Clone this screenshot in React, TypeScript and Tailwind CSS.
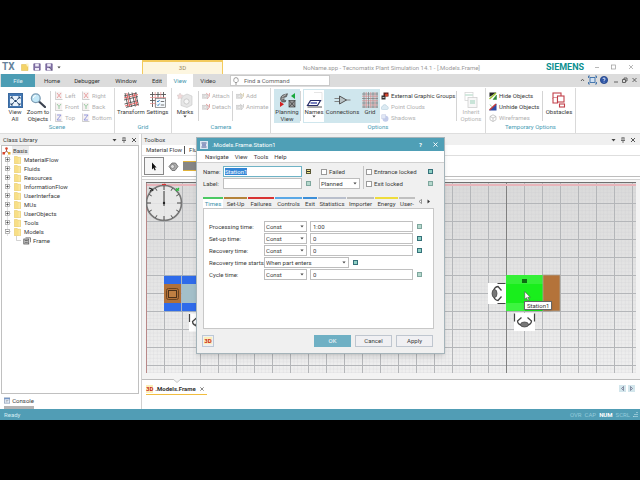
import React, { useEffect, useRef, useState } from 'react';
import clsx from 'clsx';

/* ---------- small shared bits ---------- */

const Caret = () => (
  <svg viewBox="0 0 4 3" className="w-1 h-[3px]">
    <path d="M0.4 0.5h3.2L2 2.5z" fill="#444" />
  </svg>
);

const Separator = () => <div className="w-px h-[30px] mt-[3px] bg-[#d4d4d4] shrink-0" />;

const Indicator = ({ label, dark, open }: { label: string; dark?: boolean; open?: boolean }) => (
  <button
    type="button"
    aria-label={label}
    className={clsx(
      'flex items-center w-[5px] h-[5px] border shrink-0',
      open ? 'bg-[#f0e68c] border-[#5b5836]' : dark ? 'bg-[#8fd0c4] border-[#35717a]' : 'bg-[#b5d8cd] border-[#7fa79e]'
    )}
  >
    {open && <span className="block w-[3px] h-px bg-[#333]" />}
  </button>
);

interface SelectBoxProps {
  id: string;
  label?: string;
  options: string[];
  className: string;
}

const SelectBox = ({ id, label, options, className }: SelectBoxProps) => (
  <div className={clsx('relative', className)}>
    <select
      id={id}
      aria-label={label}
      className="appearance-none block w-full h-[11px] pl-px bg-white border border-[#bdbdbd] leading-[9px] outline-none"
    >
      {options.map((option) => (
        <option key={option}>{option}</option>
      ))}
    </select>
    <span className="absolute right-[3px] top-1 pointer-events-none">
      <Caret />
    </span>
  </div>
);

const CheckBox = ({ label }: { label: string }) => (
  <label className="flex items-center gap-0.5 whitespace-nowrap">
    <input type="checkbox" className="appearance-none w-[6px] h-[6px] bg-white border border-[#9a9a9a]" />
    {label}
  </label>
);

/* ---------- icons ---------- */

const ViewAllIcon = () => (
  <svg viewBox="0 0 15 15" className="w-[15px] h-[15px]">
    <rect x="0.5" y="0.5" width="14" height="14" fill="#4378b4" stroke="#3a699f" />
    <rect x="2" y="3" width="11" height="10" fill="#e8f2fb" />
    <path d="M3 4l3 2.6M12 4L9 6.6M3 12l3-2.6M12 12L9 9.4" stroke="#1f3f66" strokeWidth="1" />
    <path d="M3 6V4h2M10 4h2v2M3 10v2h2M10 12h2v-2" stroke="#1f3f66" fill="none" strokeWidth="0.8" />
    <rect x="6.3" y="7" width="2.4" height="2" fill="#1f3f66" />
  </svg>
);

const ZoomIcon = () => (
  <svg viewBox="0 0 16 15" className="w-4 h-[15px]">
    <path d="M9 8.5l6 5.5" stroke="#3c4350" strokeWidth="2.2" strokeLinecap="round" />
    <circle cx="5.8" cy="5.2" r="4.4" fill="#c3e8f8" stroke="#7d9db5" strokeWidth="1.3" />
    <path d="M3.3 5a2.6 2.6 0 0 1 2.6-2.4" stroke="#fff" strokeWidth="1" fill="none" />
  </svg>
);

const AxisIcon = ({ axis }: { axis: 'X' | 'Y' | 'Z' }) => {
  const stroke = { X: '#e89a9a', Y: '#8fc79a', Z: '#8c93dc' }[axis];
  const path = { X: 'M2 2l4 5M6 2l-4 5', Y: 'M2 2l2 2.5L6 2M4 4.5V7', Z: 'M2 2h4L2 7h4' }[axis];
  return (
    <svg viewBox="0 0 8 9" className="w-2 h-[9px] shrink-0">
      <path d="M0.5 0.5v8h7" fill="none" stroke="#b9b9b9" strokeWidth="0.7" />
      <rect x="0.8" y="0.8" width="6.4" height="7" fill="#f5f0f0" />
      <path d={path} fill="none" stroke={stroke} strokeWidth="0.9" />
    </svg>
  );
};

const TransformIcon = () => (
  <svg viewBox="0 0 16 16" className="w-4 h-4">
    <g fill="none" strokeWidth="0.9">
      <path d="M1 4l13-3M1 8l14-3.4M1.5 12L15 8.6M3 15.4l12-3" stroke="#555" />
      <path d="M2 1l3 14M5.5 0.5l3.2 14.5M9 0.5l3.3 14M12.5 0.5l3 13" stroke="#555" />
      <path d="M1 6l14-3.4M2 14L15 10.4M3.8 1l3 14M11 1l3 13" stroke="#e05a5a" />
    </g>
  </svg>
);

const SettingsIcon = () => (
  <svg viewBox="0 0 16 16" className="w-4 h-4">
    <path d="M0 2.5h16M0 8.5h16M2.5 0v15M8 0v15M13.5 0v15" stroke="#555" strokeWidth="0.9" />
    <path d="M0 5.5h16M0 11.5h6M5.2 0v15M10.8 0v6" stroke="#e58c8c" strokeWidth="0.7" />
    <rect x="5.5" y="6.5" width="10" height="9" fill="#f4f9fd" stroke="#777" strokeWidth="0.7" />
    <path d="M7 9l1 1 1.6-2M7 12.6l1 1 1.6-2" stroke="#2b79c2" fill="none" strokeWidth="0.9" />
    <path d="M10.8 9.5h3.4M10.8 13h3.4" stroke="#555" strokeWidth="0.8" />
  </svg>
);

const MarksIcon = () => (
  <svg viewBox="0 0 16 16" className="w-4 h-4">
    <path d="M3 1l1 2 2 .3L4.5 5l.5 2-2-1-2 1 .4-2L0 3.3 2 3z" fill="#f2d9d9" stroke="#cfc6c6" strokeWidth="0.5" />
    <path d="M6 4l4-2 5 2v9l-5 2.5-6-2V8z" fill="#e6e6e6" stroke="#c6c6c6" strokeWidth="0.6" />
    <circle cx="9.5" cy="9.5" r="2.6" fill="#f6f6f6" stroke="#c3c3c3" strokeWidth="0.8" />
  </svg>
);

const CameraIcon = ({ tint }: { tint: string }) => (
  <svg viewBox="0 0 8 8" className="w-2 h-2 shrink-0">
    <rect x="0.5" y="2.2" width="5.5" height="4" fill="#dedede" stroke="#c4c4c4" strokeWidth="0.5" />
    <circle cx="3.2" cy="4.2" r="1.2" fill="#f4f4f4" stroke="#bbb" strokeWidth="0.4" />
    <path d="M4 1l3.5 3M7.5 1v3L5 7" stroke={tint} strokeWidth="0.8" fill="none" />
  </svg>
);

const PlanningIcon = () => (
  <svg viewBox="0 0 17 16" className="w-[17px] h-4">
    <path d="M1.5 7.5c0-3.2 1.8-4.5 4-5l3-.8-1 3-2.5.7v2.8l2 .3-.8 1.5H3z" fill="#777" stroke="#444" strokeWidth="0.6" />
    <path d="M3 5l4-2.5M2.5 7l3-1" stroke="#ddd" strokeWidth="0.6" />
    <path d="M16 1v6l-4-3z" fill="#18a83c" />
    <path d="M1 9.5v5.5l4-2.7z" fill="#d32020" />
    <rect x="10" y="8.5" width="6" height="6.5" fill="#999" stroke="#444" strokeWidth="0.7" />
    <path d="M10 8.5l6 6.5M16 8.5L10 15" stroke="#333" strokeWidth="0.7" />
  </svg>
);

const NamesIcon = () => (
  <svg viewBox="0 0 17 16" className="w-[17px] h-4">
    <path d="M8 0.5h8v9" fill="none" stroke="#d4d4d4" strokeWidth="0.6" />
    <path d="M4.5 8.5h10l-3 5h-10z" fill="#fff" stroke="#242a66" strokeWidth="1.2" />
    <path d="M4.5 11h6.5" stroke="#3440a0" strokeWidth="1.3" />
    <path d="M1.5 15h14.5" stroke="#444" strokeWidth="0.9" />
  </svg>
);

const ConnectionsIcon = () => (
  <svg viewBox="0 0 17 16" className="w-[17px] h-4">
    <path d="M0.5 6.5h5.5M0.5 9.5h5.5M11 8h5.5" stroke="#777" strokeWidth="0.9" />
    <path d="M5.5 4l7 4-7 4z" fill="#b9c3c6" stroke="#555" strokeWidth="1" />
  </svg>
);

const GridIcon = () => (
  <svg viewBox="0 0 16 16" className="w-4 h-4">
    <path d="M0 2h16M0 6.5h16M0 11h16M0 15h16M2 0v16M6.5 0v16M11 0v16M15 0v16" stroke="#777" strokeWidth="0.7" />
    <path d="M0 4.2h16M0 8.8h16M0 13h16M4.2 0v16M8.8 0v16M13 0v16" stroke="#d98686" strokeWidth="0.7" />
  </svg>
);

const GroupsIcon = () => (
  <svg viewBox="0 0 8 8" className="w-2 h-2 shrink-0">
    <rect x="2.5" y="0.5" width="5" height="4" fill="#5a2020" />
    <rect x="0.5" y="3.5" width="4" height="4" fill="#333" />
    <circle cx="5.5" cy="3" r="1.6" fill="#d8452c" />
    <path d="M1.5 5.5h2" stroke="#fff" strokeWidth="0.7" />
  </svg>
);

const CloudIcon = () => (
  <svg viewBox="0 0 8 8" className="w-2 h-2 shrink-0">
    <path d="M1.5 6.5a1.5 1.5 0 0 1 0-3 2.2 2.2 0 0 1 4.3-.3 1.7 1.7 0 0 1 .4 3.3z" fill="#dceaf2" stroke="#b6cfdd" strokeWidth="0.6" />
  </svg>
);

const ShadowIcon = () => (
  <svg viewBox="0 0 8 8" className="w-2 h-2 shrink-0">
    <circle cx="4.5" cy="4.8" r="3" fill="#c3ccea" />
    <rect x="0.8" y="0.8" width="4" height="4" fill="#e2e8f6" stroke="#bcc4e0" strokeWidth="0.5" />
  </svg>
);

const InheritIcon = () => (
  <svg viewBox="0 0 14 16" className="w-[14px] h-4">
    <rect x="1" y="0.5" width="8" height="8" fill="#fff" stroke="#d6d6d6" strokeWidth="0.8" />
    <path d="M1 3h8" stroke="#c7e3d6" strokeWidth="1.5" />
    <rect x="4" y="5.5" width="9" height="10" fill="#f7f7f7" stroke="#cfcfcf" strokeWidth="0.8" />
    <rect x="6" y="8" width="5" height="4" fill="#c9e4d8" />
  </svg>
);

const HideIcon = ({ unhide }: { unhide?: boolean }) => (
  <svg viewBox="0 0 8 8" className="w-2 h-2 shrink-0">
    <path d={unhide ? 'M0 7.5L7.5 0.5v7z' : 'M0.5 0.5h7L0.5 5z'} fill={unhide ? '#2d4aa6' : '#222'} />
    <path d="M0.5 7L7 1" stroke={unhide ? '#c23a3a' : '#9bc22a'} strokeWidth="1.4" />
    <path d={unhide ? 'M1 1.5l1.5 2' : 'M4 7.5L7.5 3v4.5z'} fill="#2f8a3c" stroke="#2f8a3c" strokeWidth="0.5" />
  </svg>
);

const WireIcon = () => (
  <svg viewBox="0 0 8 8" className="w-2 h-2 shrink-0">
    <path d="M1 2.5l3-1.7 3 1.7v3.3L4 7.5 1 5.8zM1 2.5l3 1.5 3-1.5M4 4v3.5" fill="none" stroke="#b5b5b5" strokeWidth="0.7" />
  </svg>
);

const ObstaclesIcon = () => (
  <svg viewBox="0 0 14 16" className="w-[14px] h-4">
    <g fill="#fff" stroke="#c2404a" strokeWidth="1.1">
      <rect x="1" y="1" width="8" height="5" />
      <path d="M1 6v5h4.5V6" />
      <rect x="5.5" y="4" width="6.5" height="6" />
      <rect x="7.5" y="12" width="5" height="3" />
    </g>
  </svg>
);

const FolderIcon = () => (
  <svg viewBox="0 0 7 8" className="w-[7px] h-2">
    <path d="M0.3 0.5h3l0.7 0.8h2.7v6.4H0.3z" fill="#f8df86" stroke="#e3c25c" strokeWidth="0.5" />
    <path d="M5.2 1.5v6" stroke="#fdf0bd" strokeWidth="0.7" />
  </svg>
);

const FrameIcon = () => (
  <svg viewBox="0 0 8 8" className="w-2 h-2">
    <path d="M2.5 0.8h5v4.5" fill="none" stroke="#555" strokeWidth="0.7" />
    <rect x="0.8" y="2" width="5" height="5" fill="#ccc" stroke="#444" strokeWidth="0.7" />
    <path d="M1.8 3.5h3M1.8 5.3h3" stroke="#444" strokeWidth="0.7" />
  </svg>
);

const ThreeD = () => <span className="font-bold text-[#c8281c] leading-2 bg-[#fbeeb8]">3D</span>;

const PanelControls = () => (
  <svg viewBox="0 0 25 6" className="w-[25px] h-[6px]">
    <path d="M0.5 2h4L2.5 4.5z" fill="#444" />
    <path d="M10.5 0.8h3M11 0.8v2.7M13 0.8v2.7M10 3.5h4M12 3.5V6" stroke="#555" strokeWidth="0.8" fill="none" />
    <path d="M20 1l4 4M24 1l-4 4" stroke="#444" strokeWidth="0.9" />
  </svg>
);

/* ---------- title bar and ribbon ---------- */

const TitleBar = () => (
  <header className="flex h-[14px] bg-white">
    <div className="flex items-center gap-1 w-[142px] pl-0.5">
      <span className="w-[15px] text-[10px] leading-3 font-bold text-[#66839c]">TX</span>
      <svg viewBox="0 0 8 8" className="w-2 h-2">
        <path d="M0.5 1.5h5l1.5 1v5H0.5z" fill="#f4d367" stroke="#dcb84b" strokeWidth="0.5" />
        <path d="M5 0.5h2.5v3H6z" fill="#fdf3c4" />
      </svg>
      {[0, 1].map((i) => (
        <svg key={i} viewBox="0 0 8 8" className="w-2 h-2">
          <path d="M0.8 0.8h6.4v6.4H0.8z" fill="#8474a8" stroke="#65558d" strokeWidth="0.7" />
          <path d="M2.2 0.8h3.6v2.7H2.2zM2 5h4v2.2H2z" fill="#eee9f7" />
          {i === 1 && <path d="M4 4l3 3.5" stroke="#5a5370" strokeWidth="1" />}
        </svg>
      ))}
      <Caret />
    </div>
    <div className="w-[81px] bg-[#fdf6e0] border-t-2 border-x border-[#f3cb5e] text-center leading-[11px] text-[#9a8a62]">
      3D
    </div>
    <h1 className="flex-1 pl-20 leading-[15px] text-[#999] whitespace-nowrap">
      NoName.spp - Tecnomatix Plant Simulation 14.1 - [.Models.Frame]
    </h1>
    <span className="w-[45px] text-[9px] leading-[14px] font-bold text-[#0a8f8f]">SIEMENS</span>
    <div className="flex items-center w-[49px]">
      <svg viewBox="0 0 49 8" className="w-[49px] h-2" fill="none" stroke="#999" strokeWidth="0.7">
        <path d="M4 4.5h4M38 2l4 4M42 2l-4 4" />
        <rect x="20.5" y="2" width="4" height="4" />
      </svg>
    </div>
  </header>
);

const menuTabs = [
  { name: 'Home', width: 'w-[34px]' },
  { name: 'Debugger', width: 'w-9' },
  { name: 'Window', width: 'w-[42px]' },
  { name: 'Edit', width: 'w-5' },
  { name: 'View', width: 'w-[26px]' },
  { name: 'Video', width: 'w-[30px]' },
];

const TabRow = () => (
  <nav className="flex h-[13px] bg-[#dcdcdc] pl-px leading-[13px]">
    <button type="button" className="w-[34px] bg-[#4c9db4] text-[#e4f3f7]">File</button>
    {menuTabs.map((tab) => (
      <button
        key={tab.name}
        type="button"
        className={clsx(tab.width, 'text-center', tab.name === 'View' ? 'bg-white text-[#3b93ab]' : 'text-[#333]')}
      >
        {tab.name}
      </button>
    ))}
    <label className="flex items-center w-[100px] h-[11px] mt-px ml-[7px] bg-white border border-[#c9c9c9]">
      <svg viewBox="0 0 8 8" className="w-2 h-2 ml-px" fill="none" stroke="#777" strokeWidth="0.7">
        <path d="M3 5.5C1.8 4.5 1.6 3.6 1.8 2.8a2.2 2.2 0 0 1 4.4 0C6.4 3.6 6.2 4.5 5 5.5zM3 7h2" />
      </svg>
      <input
        aria-label="Find a Command"
        placeholder="Find a Command"
        className="w-20 pl-1 leading-[9px] outline-none placeholder:text-[#666]"
      />
    </label>
    <svg viewBox="0 0 60 12" className="w-[60px] h-3 ml-auto" fill="none" stroke="#555" strokeWidth="0.9">
      <path d="M1 7l1.5-1.8L4 7M34 8h4M52.5 4l4 4M56.5 4l-4 4" />
      <rect x="10" y="3.5" width="5" height="5" fill="#cfe0f2" stroke="#3a6ea8" />
      <path d="M8.5 4V2H10M15 2h1.5v2M8.5 8v2H10M15 10h1.5V8" stroke="#3a6ea8" />
      <circle cx="24" cy="6" r="3.6" fill="#2f57a8" stroke="#27488c" />
      <path d="M22.9 5c.2-1.4 2.3-1.2 2.2.1 0 .8-1.1.8-1.1 1.7M24 7.8v.6" stroke="#fff" />
      <path d="M42.5 5.5h3v3h-3zM44 5.5V4h3v3h-1.5" />
    </svg>
  </nav>
);

interface BigButtonProps {
  icon: React.ReactNode;
  lines: string[];
  width: string;
  state?: 'on' | 'disabled';
  menu?: boolean;
}

const BigButton = ({ icon, lines, width, state, menu }: BigButtonProps) => (
  <button
    type="button"
    disabled={state === 'disabled'}
    className={clsx(
      'flex flex-col items-center shrink-0 h-[34px] mt-px pt-[3px] leading-[7px] whitespace-nowrap',
      width,
      state === 'on' && 'bg-[#cfe6ed]',
      state === 'disabled' && 'text-[#b5b5b5]'
    )}
  >
    <span className="flex items-center h-4">{icon}</span>
    {lines.map((line) => (
      <span key={line}>{line}</span>
    ))}
    {menu && <Caret />}
  </button>
);

const SmallButton = ({ icon, text, disabled }: { icon: React.ReactNode; text: string; disabled?: boolean }) => (
  <button
    type="button"
    disabled={disabled}
    className={clsx('flex items-center gap-0.5 h-[11px] whitespace-nowrap', disabled && 'text-[#b0b0b0]')}
  >
    {icon}
    {text}
  </button>
);

const RibbonGroup = ({ title, width, children }: { title: string; width: string; children: React.ReactNode }) => (
  <section className={clsx('flex flex-col h-[45px] mt-px border-r border-[#d9d9d9] shrink-0', width)}>
    <div className="flex h-[35px]">{children}</div>
    <h2 className="text-center leading-2 text-[#4a9db5]">{title}</h2>
  </section>
);

const Ribbon = () => (
  <div className="flex h-[47px] bg-white border-b border-[#dedede]">
    <RibbonGroup title="Scene" width="w-[115px]">
      <BigButton icon={<ViewAllIcon />} lines={['View', 'All']} width="w-[22px] ml-1" />
      <BigButton icon={<ZoomIcon />} lines={['Zoom to', 'Objects']} width="w-6" />
      <Separator />
      <div className="grid grid-cols-[27px_auto] content-start pt-0.5 pl-1">
        <SmallButton icon={<AxisIcon axis="X" />} text="Left" disabled />
        <SmallButton icon={<AxisIcon axis="X" />} text="Right" disabled />
        <SmallButton icon={<AxisIcon axis="Y" />} text="Front" disabled />
        <SmallButton icon={<AxisIcon axis="Y" />} text="Back" disabled />
        <SmallButton icon={<AxisIcon axis="Z" />} text="Top" disabled />
        <SmallButton icon={<AxisIcon axis="Z" />} text="Bottom" disabled />
      </div>
    </RibbonGroup>
    <RibbonGroup title="Grid" width="w-[57px]">
      <BigButton icon={<TransformIcon />} lines={['Transform']} width="w-[30px] ml-px" />
      <BigButton icon={<SettingsIcon />} lines={['Settings']} width="w-[23px]" />
    </RibbonGroup>
    <RibbonGroup title="Camera" width="w-[99px]">
      <BigButton icon={<MarksIcon />} lines={['Marks']} width="w-[26px]" menu />
      <Separator />
      <div className="flex flex-col w-[33px] pt-0.5 pl-[3px]">
        <SmallButton icon={<CameraIcon tint="#e6a6a6" />} text="Attach" disabled />
        <SmallButton icon={<CameraIcon tint="#dd8f8f" />} text="Detach" disabled />
      </div>
      <Separator />
      <div className="flex flex-col pt-0.5 pl-[3px]">
        <SmallButton icon={<CameraIcon tint="#d8cda6" />} text="Add" disabled />
        <SmallButton icon={<CameraIcon tint="#c9c9c9" />} text="Animate" disabled />
      </div>
    </RibbonGroup>
    <RibbonGroup title="Options" width="w-[215px]">
      <BigButton icon={<PlanningIcon />} lines={['Planning', 'View']} width="w-[26px] ml-[3px]" state="on" />
      <Separator />
      <div className="flex ml-0.5">
        <BigButton icon={<NamesIcon />} lines={['Names']} width="w-[22px] outline -outline-offset-1 outline-[#cfe6ed]" menu />
        <BigButton icon={<ConnectionsIcon />} lines={['Connections']} width="w-[35px]" state="on" />
        <BigButton icon={<GridIcon />} lines={['Grid']} width="w-5" state="on" />
      </div>
      <div className="flex flex-col w-[76px] pt-0.5 pl-px">
        <SmallButton icon={<GroupsIcon />} text="External Graphic Groups" />
        <SmallButton icon={<CloudIcon />} text="Point Clouds" disabled />
        <SmallButton icon={<ShadowIcon />} text="Shadows" disabled />
      </div>
      <Separator />
      <BigButton icon={<InheritIcon />} lines={['Inherit', 'Options']} width="w-7" state="disabled" />
    </RibbonGroup>
    <RibbonGroup title="Temporary Options" width="w-[90px]">
      <div className="flex flex-col w-14 pt-0.5 pl-[3px]">
        <SmallButton icon={<HideIcon />} text="Hide Objects" />
        <SmallButton icon={<HideIcon unhide />} text="Unhide Objects" />
        <SmallButton icon={<WireIcon />} text="Wireframes" disabled />
      </div>
      <Separator />
      <BigButton icon={<ObstaclesIcon />} lines={['Obstacles']} width="w-8" />
    </RibbonGroup>
  </div>
);

/* ---------- class library ---------- */

const folders = [
  'MaterialFlow', 'Fluids', 'Resources', 'InformationFlow', 'UserInterface',
  'MUs', 'UserObjects', 'Tools', 'Models',
];

const ClassLibrary = () => (
  <aside className="flex flex-col w-[139px] shrink-0 bg-white">
    <div className="flex items-center justify-between h-[11px] pl-[3px] pr-[2px] bg-[#f0f0f0]">
      <h2>Class Library</h2>
      <PanelControls />
    </div>
    <ul className="flex-1 ml-px border border-[#c0c0c0] leading-[9px]">
      <li className="flex items-center gap-px">
        <svg viewBox="0 0 9 8" className="w-[9px] h-2">
          <path d="M4.5 1v3M4.5 4L2 6.5M4.5 4L7 6.5" stroke="#8c3020" strokeWidth="0.8" />
          <circle cx="4.5" cy="1.5" r="1.3" fill="#d8452c" />
          <rect x="0.5" y="5" width="2.5" height="2.5" fill="#d8452c" />
          <rect x="6" y="5" width="2.5" height="2.5" fill="#e0a52c" />
        </svg>
        <span className="bg-[#ececec] px-px">Basis</span>
      </li>
      {folders.map((folder) => (
        <li key={folder} className="flex items-center gap-[3px] pl-[3px]">
          <svg viewBox="0 0 6 9" className="w-[6px] h-[9px]">
            <path d="M2.5 0v9M4.5 4.5H6" stroke="#c4c4c4" strokeWidth="0.5" />
            <rect x="0.5" y="2.5" width="4" height="4" fill="#fff" stroke="#999" strokeWidth="0.7" />
            <path d={folder === 'Models' ? 'M1.3 4.5h2.4' : 'M1.3 4.5h2.4M2.5 3.3v2.4'} stroke="#333" strokeWidth="0.7" />
          </svg>
          <FolderIcon />
          {folder}
        </li>
      ))}
      <li className="flex items-center gap-[2px] pl-[14px]">
        <svg viewBox="0 0 5 9" className="w-[5px] h-[9px]">
          <path d="M0.5 0v4.5H5" fill="none" stroke="#b5b5b5" strokeWidth="0.6" />
        </svg>
        <FrameIcon />
        Frame
      </li>
    </ul>
    <div className="h-[15px]">
      <button type="button" className="flex flex-col w-[30px] ml-1">
        <span className="flex items-center gap-0.5 h-3">
          <svg viewBox="0 0 7 7" className="w-[7px] h-[7px]">
            <rect x="0.5" y="0.5" width="6" height="6" fill="#e6eef8" stroke="#7d91ad" strokeWidth="0.7" />
            <path d="M0.5 1.5h6" stroke="#4c78b8" strokeWidth="1" />
            <path d="M2 3.5h3M2 5h2" stroke="#777" strokeWidth="0.5" />
          </svg>
          Console
        </span>
        <span className="w-full h-[3px] bg-[#b3b3b3]" />
      </button>
    </div>
  </aside>
);

/* ---------- model canvas ---------- */

const Person = ({ transform }: { transform: string }) => (
  <g transform={transform}>
    <rect x="-10.5" y="-9" width="21" height="18" fill="#fff" />
    <path d="M-10 -8.5v8M10 -8.5v8" stroke="#444" strokeWidth="1.2" />
    <path d="M-3 -4.5l-4 3.5c0 2.5 3 4.5 7 5M3 -4.5l4 3.5c0 2.5-3 4.5-7 5" fill="none" stroke="#444" strokeWidth="1.3" />
    <ellipse cx="0" cy="2.5" rx="4" ry="2.5" fill="#777" stroke="#444" strokeWidth="0.7" />
  </g>
);

const ModelCanvas = () => (
  <div className="relative flex-1 mx-1 border-t border-[#6f6f6f] bg-linear-to-b from-[#dadada] to-[#efefef] overflow-hidden">
    <svg className="absolute inset-0 w-full h-full">
      <defs>
        <pattern id="minor" width="3.6" height="3.6" patternUnits="userSpaceOnUse" x="0" y="2">
          <path d="M0 0h3.6M0 0v3.6" stroke="#c0c4c8" strokeOpacity="0.45" strokeWidth="0.7" fill="none" />
        </pattern>
        <pattern id="major" width="18" height="18" patternUnits="userSpaceOnUse" x="0" y="2">
          <path d="M0 0.5h18M0.5 0v18" stroke="#b4b6b9" strokeWidth="1" fill="none" />
        </pattern>
      </defs>
      <rect width="100%" height="100%" fill="url(#minor)" />
      <rect width="100%" height="100%" fill="url(#major)" />
      <path d="M360.5 0v200" stroke="#808080" strokeWidth="1" />
      <rect width="100%" height="2" y="1" fill="#e8b4ba" />
      <rect width="1" height="100%" fill="#b88888" />

      {/* compass */}
      <circle cx="18" cy="20" r="17.5" fill="#ebebeb" fillOpacity="0.8" stroke="#777" strokeWidth="1.6" />
      <path
        d="M18 3v4M18 33v4M1 20h4M31 20h4M9.5 5.3l1.4 2.4M26.5 5.3l-1.4 2.4M3.3 11.5l2.4 1.4M32.7 11.5l-2.4 1.4M3.3 28.5l2.4-1.4M32.7 28.5l-2.4-1.4M9.5 34.7l1.4-2.4M26.5 34.7l-1.4-2.4"
        stroke="#222"
        strokeWidth="0.8"
      />
      <path d="M18 8v15" stroke="#222" strokeWidth="0.9" />
      <circle cx="18" cy="20" r="1.2" fill="#222" />
      <path d="M3 5l3 1-2 2.5M6 6l1 2" stroke="#222" strokeWidth="1.1" fill="none" />
      <path d="M30 8l3-3M30 5.5l3 2" stroke="#28b93c" strokeWidth="1.2" />
      <path d="M16 1.5h4" stroke="#d33" strokeWidth="1.2" />

      {/* source and conveyor on the left */}
      <rect x="18" y="93" width="17" height="35" fill="#2f6bea" />
      <rect x="18" y="101" width="17" height="19" fill="#b1713a" />
      <rect x="20.5" y="105.5" width="12" height="11" rx="2" fill="none" stroke="#6b431f" strokeWidth="1" />
      <rect x="22.5" y="107.5" width="8" height="7" fill="#c07f42" stroke="#4e321a" strokeWidth="1" />
      <rect x="36" y="93" width="37" height="35" fill="#2f6bea" />
      <rect x="36" y="101" width="37" height="19" fill="#a3bfc9" />
      <path d="M18 92.5h55M18 128.5h55M35.5 92.5v36" stroke="#9aabbf" strokeWidth="0.8" />
      <Person transform="translate(53.5 139.5)" />

      {/* selected station */}
      <Person transform="translate(351 110.5) rotate(90)" />
      <Person transform="translate(378.5 139)" />
      <rect x="360" y="92" width="37" height="36" fill="#19ee1c" />
      <rect x="360" y="92" width="37" height="9" fill="#35f038" />
      <rect x="360" y="120" width="19" height="8" fill="#3df440" />
      <rect x="376" y="96" width="5" height="4" fill="#0d6d12" />
      <rect x="397" y="92" width="17" height="36" fill="#b4733a" stroke="#a9a29a" strokeWidth="0.8" />
    </svg>
    <span className="absolute left-[378px] top-[118px] px-0.5 border border-[#666] bg-white leading-[7px] text-[#333] shadow-sm">
      Station1
    </span>
    <svg viewBox="0 0 6 9" className="absolute left-[378px] top-[108px] w-[7px] h-[10px]">
      <path d="M0.5 0.5v7l1.6-1.5 1.2 2.6 1.1-.5-1.2-2.5h2.3z" fill="#fff" stroke="#444" strokeWidth="0.5" />
    </svg>
  </div>
);

const Workspace = () => (
  <main className="flex flex-col flex-1 min-w-0 ml-0.5 bg-white border-l border-[#d0d0d0]">
    <div className="flex items-center justify-between h-[11px] pl-0.5 pr-1 bg-[#f0f0f0]">
      <h2>Toolbox</h2>
      <PanelControls />
    </div>
    <div className="flex items-center h-[11px] pl-1 border-b border-[#dedede] whitespace-nowrap">
      <button type="button" className="pr-0.5 border-r border-[#555] leading-2">Material Flow</button>
      <button type="button" className="pl-1 leading-2">Fluids</button>
    </div>
    <div className="flex items-center h-[21px] pl-0.5 gap-1 border-b border-[#bdbdbd]">
      <button type="button" aria-label="Select" className="flex items-center justify-center w-5 h-[18px] bg-[#f6f6f6] border border-[#888]">
        <svg viewBox="0 0 6 9" className="w-[6px] h-[9px]">
          <path d="M1 0.5v7l1.5-1.5 1.2 2.6 1.1-.5L3.6 5.6h2z" fill="#111" />
        </svg>
      </button>
      <svg viewBox="0 0 11 11" className="w-[11px] h-[11px]">
        <path d="M1 5.5L4 2h3.5L10 5.5 7 9.5H4z" fill="#a9a9a9" stroke="#666" strokeWidth="0.8" />
        <circle cx="4.5" cy="5.5" r="2" fill="#ddd" stroke="#777" strokeWidth="0.7" />
      </svg>
      <svg viewBox="0 0 18 10" className="w-[18px] h-[10px]">
        <rect width="18" height="10" fill="#e0b23a" />
        <rect y="1" width="18" height="8" fill="#858585" />
      </svg>
    </div>
    <div className="h-[3px] mt-0.5 border-t border-[#d4d4d4] bg-[#f5f5f5]" />
    <div className="flex flex-col flex-1 bg-[#f3f3f3]">
      <ModelCanvas />
      <div className="h-[6px]" />
    </div>
    <div className="relative flex justify-between items-start h-[30px] pt-[3px] pl-1 pr-[5px] bg-white border-t border-[#bdbdbd]">
      <svg viewBox="0 0 8 4" className="absolute left-[31px] -top-px w-2 h-1">
        <path d="M0 0l4 3.5L8 0" fill="#f3f3f3" stroke="#bdbdbd" strokeWidth="0.8" />
      </svg>
      <button type="button" className="flex items-center gap-0.5 w-[61px] h-3 border-b border-[#f1bd3f] font-bold text-[#333] whitespace-nowrap">
        <ThreeD />
        .Models.Frame
        <svg viewBox="0 0 4 4" className="w-1 h-1 shrink-0 ml-auto mr-[3px]">
          <path d="M0.3 0.3l3.4 3.4M3.7 0.3L0.3 3.7" stroke="#555" strokeWidth="0.7" />
        </svg>
      </button>
      <div className="flex gap-0.5 pt-0.5">
        {['M4.5 1.5v4l-2-2z', 'M2.5 1.5v4l2-2z'].map((d, i) => (
          <button key={d} type="button" aria-label={i ? 'Next' : 'Previous'} className="w-[7px] h-[7px] bg-[#d3e6ec]">
            <svg viewBox="0 0 7 7" className="w-[7px] h-[7px]">
              <path d={d} fill="#cfdfe4" stroke="#557" strokeWidth="0.6" />
            </svg>
          </button>
        ))}
      </div>
    </div>
  </main>
);

/* ---------- station dialog ---------- */

const dialogTabs = [
  { name: 'Times', width: 'w-5', bar: 'border-[#4cc964]' },
  { name: 'Set-Up', width: 'w-[23px]', bar: 'border-[#b5833a]' },
  { name: 'Failures', width: 'w-[26px]', bar: 'border-[#d83434]' },
  { name: 'Controls', width: 'w-[27px]', bar: 'border-[#5aa8e6]' },
  { name: 'Exit', width: 'w-[14px]', bar: 'border-[#3d8fd8]' },
  { name: 'Statistics', width: 'w-7', bar: 'border-[#b9bfcc]' },
  { name: 'Importer', width: 'w-[27px]', bar: 'border-[#bdbdbd]' },
  { name: 'Energy', width: 'w-[23px]', bar: 'border-[#eedc3c]' },
  { name: 'User-', width: 'w-4', bar: 'border-[#c0c0c0]' },
];

const timeRows = [
  { id: 'processing', label: 'Processing time:', value: '1:00', dark: false },
  { id: 'setup', label: 'Set-up time:', value: '0', dark: true },
  { id: 'recovery', label: 'Recovery time:', value: '0', dark: true },
  { id: 'starts', label: 'Recovery time starts:', value: null, dark: false },
  { id: 'cycle', label: 'Cycle time:', value: '0', dark: false },
];

const field = 'h-[11px] px-0.5 bg-white border border-[#c0c0c0] leading-[9px] outline-none';

const StationDialog = () => {
  const [activeTab, setActiveTab] = useState('Times');
  const nameRef = useRef<HTMLInputElement>(null);

  useEffect(() => {
    nameRef.current?.focus();
    nameRef.current?.select();
  }, []);

  return (
    <div
      role="dialog"
      aria-label=".Models.Frame.Station1"
      className="absolute left-[196px] top-[77px] w-[249px] bg-[#f0f0f0] border border-[#a5b4ba] shadow-md"
    >
      <div className="flex items-center h-[13px] pl-[3px] pr-[3px] bg-[#4f9fb6] text-white">
        <svg viewBox="0 0 8 8" className="w-2 h-2">
          <rect width="8" height="8" fill="#dce8f2" />
          <path d="M1.5 2h5M1.5 6h5" stroke="#3a4c88" strokeWidth="0.9" />
          <rect x="2" y="3.2" width="4" height="1.6" fill="#7a86b8" />
        </svg>
        <span className="pl-1 flex-1">.Models.Frame.Station1</span>
        <button type="button" aria-label="Help" className="w-[17px] pr-2 font-bold">?</button>
        <button type="button" aria-label="Close" className="w-2">
          <svg viewBox="0 0 5 5" className="w-[5px] h-[5px]">
            <path d="M0.5 0.5l4 4M4.5 0.5l-4 4" stroke="#fff" strokeWidth="0.9" />
          </svg>
        </button>
      </div>
      <div className="flex items-center gap-[6px] h-[12px] pl-2 bg-white border-b border-[#d0d0d0]">
        {['Navigate', 'View', 'Tools', 'Help'].map((item) => (
          <button key={item} type="button">{item}</button>
        ))}
      </div>

      <div className="flex pt-[3px] pl-[6px] pr-[11px]">
        <div className="grid grid-cols-[18px_79px_7px] gap-x-[2px] gap-y-px items-center">
          <label htmlFor="name">Name:</label>
          <input
            id="name"
            ref={nameRef}
            defaultValue="Station1"
            className="h-[11px] px-px bg-white border border-[#6fb3c6] leading-[9px] outline-none selection:bg-[#3385d6] selection:text-white"
          />
          <span className="pl-0.5"><Indicator label="Name inheritance" open /></span>
          <label htmlFor="label">Label:</label>
          <input id="label" className={field} />
          <span className="pl-0.5"><Indicator label="Label inheritance" /></span>
        </div>
        <div className="flex flex-col gap-px w-[53px] pl-2 border-r border-[#c4c4c4]">
          <div className="flex h-[11px] pl-0.5"><CheckBox label="Failed" /></div>
          <SelectBox id="planned" label="Planned" options={['Planned', 'Unplanned']} className="w-[41px]" />
        </div>
        <div className="flex flex-col gap-px pl-0.5">
          <div className="flex h-[11px]"><CheckBox label="Entrance locked" /></div>
          <div className="flex h-[11px]"><CheckBox label="Exit locked" /></div>
        </div>
        <div className="flex flex-col justify-around ml-auto">
          <Indicator label="Entrance inheritance" dark />
          <Indicator label="Exit inheritance" />
        </div>
      </div>

      <div className="flex gap-px pt-2 pl-[6px] whitespace-nowrap">
        {dialogTabs.map((tab) => (
          <button
            key={tab.name}
            type="button"
            onClick={() => setActiveTab(tab.name)}
            className={clsx(
              'h-[11px] border-t-2 leading-[9px] text-center',
              tab.width,
              tab.bar,
              activeTab === tab.name && 'bg-white text-[#3b93ab]'
            )}
          >
            {tab.name}
          </button>
        ))}
        <svg viewBox="0 0 14 8" className="w-[14px] h-2 mt-px ml-0.5">
          <path d="M3.5 1.5v4l-2.5-2z" fill="#fff" stroke="#555" strokeWidth="0.6" />
          <path d="M9.5 1.5v4l2.5-2z" fill="#333" />
        </svg>
      </div>

      <div className="h-[121px] ml-[6px] mr-[10px] pt-[11px] pl-[5px] bg-white border border-[#c8c8c8]">
        {timeRows.map((row) => (
          <div key={row.id} className="flex items-center h-3">
            <label htmlFor={row.id} className="w-[55px] whitespace-nowrap">{row.label}</label>
            {row.value === null ? (
              <>
                <SelectBox id={row.id} options={['When part enters']} className="w-[85px] mr-1" />
                <Indicator label={row.label} dark />
              </>
            ) : (
              <>
                <SelectBox id={row.id} options={['Const', 'Normal', 'Uniform']} className="w-[43px]" />
                <input aria-label={`${row.label} value`} defaultValue={row.value} className={clsx(field, 'w-[103px] ml-[3px] mr-1')} />
                <Indicator label={row.label} dark={row.dark} />
              </>
            )}
          </div>
        ))}
      </div>

      <div className="flex items-center gap-1 h-6 pl-[5px] pr-[11px]">
        <button type="button" aria-label="3D" className="w-3 h-3 mr-auto border border-[#bcc8d6] leading-2"><ThreeD /></button>
        <button type="button" className="w-[37px] h-3 bg-[#6fb0c4] border border-[#6fb0c4] text-white leading-[10px]">OK</button>
        <button type="button" className="w-[37px] h-3 bg-[#f0f0f3] border border-[#bfc6cf] leading-[10px]">Cancel</button>
        <button type="button" className="w-[37px] h-3 bg-[#f0f0f3] border border-[#bfc6cf] leading-[10px]">Apply</button>
      </div>
    </div>
  );
};

export default function App() {
  return (
    <div className="flex flex-col min-h-screen py-[60px] bg-black">
      <div className="relative flex flex-col flex-1 bg-white font-[Roboto,'Noto_Sans',sans-serif] text-[6px] leading-[9px] text-[#3a3a3a]">
        <TitleBar />
        <TabRow />
        <Ribbon />
        <div className="flex flex-1">
          <ClassLibrary />
          <Workspace />
        </div>
        <footer className="flex items-center gap-[3px] h-[11px] pl-1 pr-0.5 bg-[#519db5] text-[#d3ecf3]">
          <span className="flex-1">Ready</span>
          <span className="text-[#96cbdb]">OVR</span>
          <span className="text-[#96cbdb]">CAP</span>
          <span className="font-bold text-white">NUM</span>
          <span className="text-[#96cbdb]">SCRL</span>
          <svg viewBox="0 0 5 5" className="w-[5px] h-[5px]" fill="#d3ecf3">
            <path d="M3.5 0h1v1h-1zM3.5 2h1v1h-1zM1.5 2h1v1h-1zM3.5 4h1v1h-1zM1.5 4h1v1h-1zM0 4h.7v1H0z" />
          </svg>
        </footer>
        <StationDialog />
      </div>
    </div>
  );
}
